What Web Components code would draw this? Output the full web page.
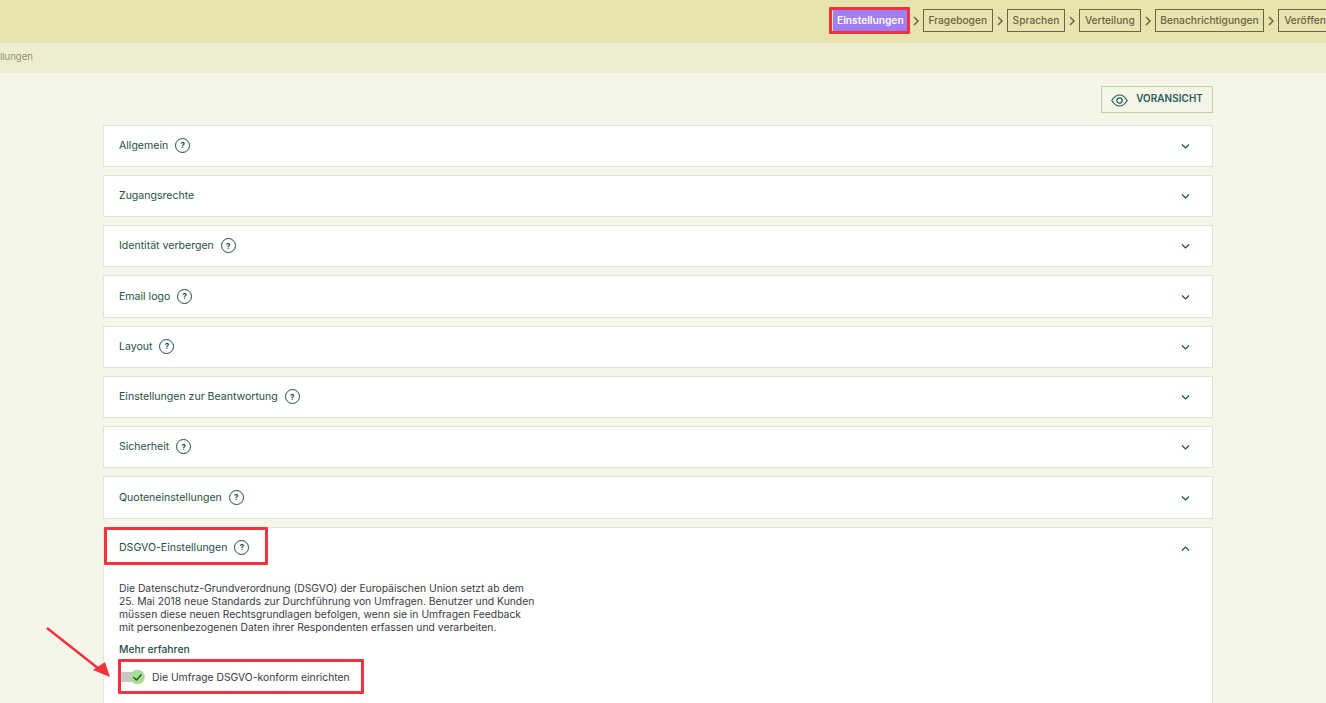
<!DOCTYPE html>
<html lang="de">
<head>
<meta charset="utf-8">
<title>Einstellungen</title>
<style>
  html, body { margin: 0; height: 703px; overflow: hidden; background: #f5f5e8; }
  body { font-family: "Inter", "Liberation Sans", sans-serif; }
</style>
</head>
<body>
<survey-page></survey-page>

<script>
class StepNav extends HTMLElement {
  constructor() {
    super();
    this.shadow = this.attachShadow({ mode: 'open' });
    this.steps = ['Einstellungen', 'Fragebogen', 'Sprachen', 'Verteilung', 'Benachrichtigungen', 'Veröffentlichen'];
  }

  connectedCallback() {
    this.render();
  }

  render() {
    this.shadow.innerHTML = /*html*/ `
      <style>
        :host{
          background:#e7e4b0;
          box-sizing:border-box;
          display:block;
          height:43px;
          overflow:hidden;
          padding:9px 0 0 833px;
        }
        .steps{
          align-items:center;
          display:flex;
          width:max-content;
        }
        .step{
          border:1px solid #6b6344;
          box-sizing:border-box;
          color:#6b6344;
          font:500 10.2px/21px "Inter","Liberation Sans",sans-serif;
          height:23px;
          padding:0 4.800px;
          white-space:nowrap;
        }
        .step.active{
          background:#a17ef5;
          border:0;
          color:#fff;
          font-weight:600;
          line-height:23px;
          margin-right:1px;
          padding:0 4px;
        }
        svg{
          display:block;
          margin:0 4px;
        }
      </style>
      <div class="steps">
        ${this.steps.map((step, i) => `
          ${i ? '<svg width="6" height="10" viewBox="0 0 6 10"><path d="M1 1l4 4-4 4" fill="none" stroke="#6b6344" stroke-width="1.5"/></svg>' : ''}
          <div class="step ${i === 0 ? 'active' : ''}">${step}</div>`).join('')}
      </div>
    `;
  }
}

class HelpIcon extends HTMLElement {
  constructor() {
    super();
    this.attachShadow({ mode: 'open' }).innerHTML = /*html*/ `
      <style>
        :host{
          align-items:center;
          border:1.500px solid #1a4f45;
          border-radius:50%;
          box-sizing:border-box;
          color:#1a4640;
          display:inline-flex;
          font:700 8px/1 "Inter","Liberation Sans",sans-serif;
          height:15px;
          justify-content:center;
          margin-left:7px;
          width:15px;
        }
      </style>?`;
  }
}

class SettingsPanel extends HTMLElement {
  static get observedAttributes() {
    return ['title-text'];
  }

  constructor() {
    super();
    this.attachShadow({ mode: 'open' });
  }

  connectedCallback() {
    const open = this.hasAttribute('open');
    const help = !this.hasAttribute('no-help');
    this.shadow = this.shadowRoot;
    this.shadow.innerHTML = /*html*/ `
      <style>
        :host{
          background:#fff;
          border:1px solid #e2e2dc;
          box-sizing:border-box;
          display:block;
          margin-bottom:8px;
        }
        .head{
          align-items:center;
          box-sizing:border-box;
          color:#1f4f48;
          display:flex;
          font-size:10.55px;
          font-weight:400;
          height:40.280px;
          padding:0 22px 1px 15px;
        }
        .title{
          align-items:center;
          display:flex;
          flex:1;
        }
        .head svg{
          margin-top:2px;
        }
        .body{
          padding:13.600px 15px 0;
        }
      </style>
      <div class="head">
        <div class="title">${this.getAttribute('title-text')}${help ? '<help-icon></help-icon>' : ''}</div>
        <svg width="9" height="5" viewBox="0 0 9 5">
          <path d="${open ? 'M1 4.500L4.500 1 8 4.500' : 'M1 .5L4.500 4 8 .5'}" fill="none" stroke="#1f4f48" stroke-width="1.200"/>
        </svg>
      </div>
      ${open ? '<div class="body"><slot></slot></div>' : ''}
    `;
  }
}

class GdprBody extends HTMLElement {
  constructor() {
    super();
    this.attachShadow({ mode: 'open' }).innerHTML = /*html*/ `
      <style>
        :host{
          color:#3a3a44;
          display:block;
          font-size:10.35px;
          height:140px;
        }
        p{
          line-height:13.300px;
          margin:0 0 8px;
          white-space:nowrap;
        }
        .more{
          color:#1f4f48;
          font-weight:500;
          line-height:13px;
        }
        .toggle-row{
          align-items:center;
          display:flex;
          gap:7px;
          margin-top:13px;
        }
        .toggle{
          display:block;
        }
      </style>
      <p>Die Datenschutz-Grundverordnung (DSGVO) der Europäischen Union setzt ab dem<br>
      25. Mai 2018 neue Standards zur Durchführung von Umfragen. Benutzer und Kunden<br>
      müssen diese neuen Rechtsgrundlagen befolgen, wenn sie in Umfragen Feedback<br>
      mit personenbezogenen Daten ihrer Respondenten erfassen und verarbeiten.</p>
      <div class="more">Mehr erfahren</div>
      <div class="toggle-row">
        <svg class="toggle" width="26" height="16" viewBox="0 0 26 16">
          <rect x="2" y="3" width="20" height="10" fill="#c8c8c8"/>
          <circle cx="18.500" cy="8" r="7.300" fill="#a5e08f"/>
          <path d="M14.500 8.200l3 2.800 5-5.500" fill="none" stroke="#2c4a3a" stroke-width="1.400"/>
        </svg>
        <span>Die Umfrage DSGVO-konform einrichten</span>
      </div>
    `;
  }
}

class SurveyPage extends HTMLElement {
  constructor() {
    super();
    this.shadow = this.attachShadow({ mode: 'open' });
    this.panels = ['Allgemein', 'Zugangsrechte', 'Identität verbergen', 'Email logo', 'Layout',
      'Einstellungen zur Beantwortung', 'Sicherheit', 'Quoteneinstellungen'];
  }

  connectedCallback() {
    this.shadow.innerHTML = /*html*/ `
      <style>
        :host{
          display:block;
          height:703px;
          overflow:hidden;
          position:relative;
        }
        .crumb{
          background:#efedd0;
          color:#8f8f78;
          font-size:9.500px;
          height:30px;
          line-height:28px;
        }
        main{
          padding:13px 113px 0 103px;
        }
        .actions{
          display:flex;
          justify-content:flex-end;
          margin-bottom:11.600px;
        }
        .preview{
          align-items:center;
          border:1px solid #bcd4a8;
          box-sizing:border-box;
          color:#23605a;
          display:flex;
          font-size:9.900px;
          font-weight:600;
          gap:8px;
          height:27px;
          letter-spacing:.1px;
          padding:0 9px 3px 9.500px;
        }
        .preview svg{
          margin-top:4px;
        }
        .mark{
          border:3px solid #f5303f;
          border-radius:1px;
          box-sizing:border-box;
          position:absolute;
        }
        .arrow{
          left:44px;
          position:absolute;
          top:624px;
        }
      </style>
      <step-nav></step-nav>
      <div class="crumb">llungen</div>
      <main>
        <div class="actions">
          <div class="preview">
            <svg width="17" height="13" viewBox="0 0 17 13">
              <path d="M.8 6.500C3 2.800 5.500 1 8.500 1s5.500 1.800 7.700 5.500C14 10.200 11.500 12 8.500 12S3 10.200.8 6.500z" fill="none" stroke="#23605a" stroke-width="1.200"/>
              <circle cx="8.500" cy="6.500" r="2.700" fill="none" stroke="#23605a" stroke-width="1.200"/>
            </svg>
            VORANSICHT
          </div>
        </div>
        ${this.panels.map((title) => `<settings-panel title-text="${title}" ${title === 'Zugangsrechte' ? 'no-help' : ''}></settings-panel>`).join('')}
        <settings-panel title-text="DSGVO-Einstellungen" open><gdpr-body></gdpr-body></settings-panel>
      </main>
      <div class="mark" style="left:829px;top:7px;width:81px;height:27px"></div>
      <div class="mark" style="left:104px;top:527px;width:164px;height:38px"></div>
      <div class="mark" style="left:118px;top:659px;width:246px;height:35px"></div>
      <svg class="arrow" width="70" height="60" viewBox="0 0 70 60">
        <path d="M3 4l52 41" stroke="#f5303f" stroke-width="2.500" fill="none"/>
        <path d="M66 53L49 46l12-8z" fill="#f5303f"/>
      </svg>
    `;
  }
}

customElements.define('step-nav', StepNav);
customElements.define('help-icon', HelpIcon);
customElements.define('settings-panel', SettingsPanel);
customElements.define('gdpr-body', GdprBody);
customElements.define('survey-page', SurveyPage);
</script>
</body>
</html>
